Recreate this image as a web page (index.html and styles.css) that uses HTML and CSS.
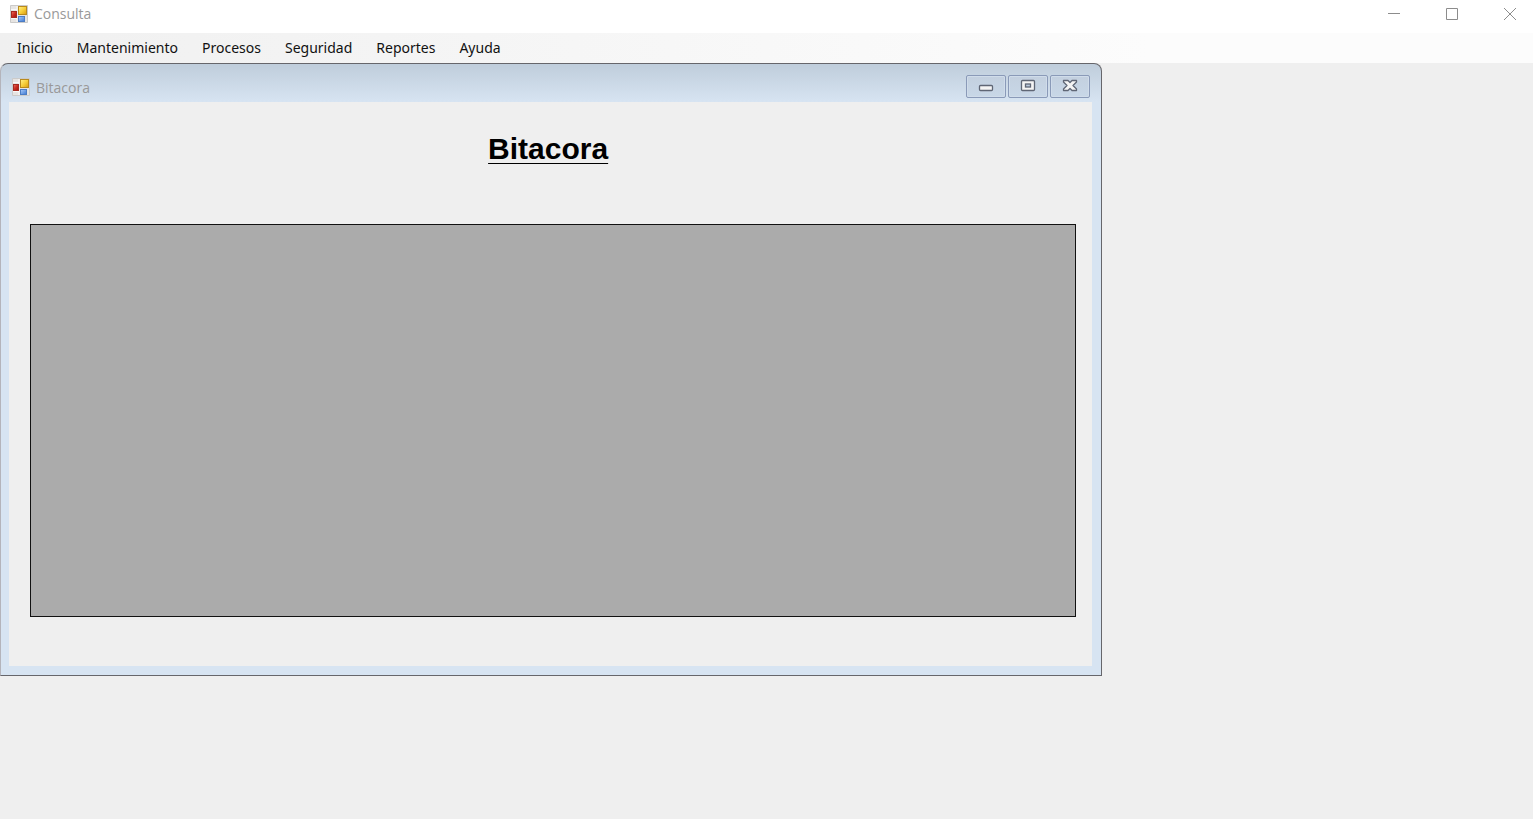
FILE: index.html
```
<!DOCTYPE html>
<html lang="es">
<head>
<meta charset="utf-8">
<title>Consulta</title>
<link rel="stylesheet" href="styles.css">
</head>
<body class="app">
<svg class="defs" width="0" height="0" aria-hidden="true">
  <defs>
    <linearGradient id="yellow" x2="1" y2="1"><stop stop-color="#fff08a"/><stop offset=".5" stop-color="#f7cf3a"/><stop offset="1" stop-color="#d99a10"/></linearGradient>
    <linearGradient id="red" x2="1" y2="1"><stop stop-color="#ec7468"/><stop offset=".5" stop-color="#c92b20"/><stop offset="1" stop-color="#9c150e"/></linearGradient>
    <linearGradient id="blue" x2="1" y2="1"><stop stop-color="#a9cbfa"/><stop offset="1" stop-color="#3d78d2"/></linearGradient>
    <symbol id="form-icon" viewBox="0 0 18 18">
      <path d="M.5 .5h17v17H.5z" fill="#e6e4e2" stroke="#cbcac9"/>
      <path d="M1 4.500h6M7 1v16M1 13.500h6" stroke="#f8f8f8"/>
      <rect x="1.500" y="6.500" width="5" height="6" fill="url(#red)" stroke="#a52a20"/>
      <rect x="8.500" y="1.500" width="8" height="8" fill="url(#yellow)" stroke="#b98a1c"/>
      <rect x="8.500" y="11.500" width="6" height="5" fill="url(#blue)" stroke="#4b7cc4"/>
    </symbol>
  </defs>
</svg>
<header class="titlebar">
  <svg class="form-icon" aria-hidden="true"><use href="#form-icon"/></svg>
  <h1 class="titlebar-text">Consulta</h1>
  <div class="window-buttons">
    <button class="window-button" type="button" aria-label="Minimizar"><svg width="12" height="12"><path d="M0 5.500h12"/></svg></button>
    <button class="window-button" type="button" aria-label="Maximizar"><svg width="12" height="12"><path d="M.5 .5h11v11H.5z"/></svg></button>
    <button class="window-button" type="button" aria-label="Cerrar"><svg width="12" height="12"><path d="M0 0l12 12M12 0L0 12"/></svg></button>
  </div>
</header>
<nav class="menu">
  <button class="menu-item" type="button">Inicio</button>
  <button class="menu-item" type="button">Mantenimiento</button>
  <button class="menu-item" type="button">Procesos</button>
  <button class="menu-item" type="button">Seguridad</button>
  <button class="menu-item" type="button">Reportes</button>
  <button class="menu-item" type="button">Ayuda</button>
</nav>
<main class="workspace">
  <section class="child">
    <header class="child-bar">
      <svg class="form-icon" aria-hidden="true"><use href="#form-icon"/></svg>
      <span class="child-title">Bitacora</span>
      <div class="child-buttons">
        <button class="child-button" type="button" aria-label="Minimizar"><svg width="16" height="14"><rect x="1.500" y="6.500" width="13" height="5" rx="1" fill="#f4f4f4" stroke="#5f6675" stroke-width="1.300"/></svg></button>
        <button class="child-button" type="button" aria-label="Maximizar"><svg width="16" height="14"><rect x="1.500" y="1.500" width="13" height="10" rx="1" fill="#f4f4f4" stroke="#5f6675" stroke-width="1.300"/><rect x="5.500" y="5" width="5" height="3" fill="#b9c8dc" stroke="#5f6675" stroke-width="1.300"/></svg></button>
        <button class="child-button" type="button" aria-label="Cerrar"><svg width="16" height="14"><path d="M1.500 1.500h4.500l2 2 2-2h4.500v1.500L11 6.500l3.500 3.500v1.500H10l-2-2-2 2H1.500V10L5 6.500 1.500 3z" fill="#f4f4f4" stroke="#5f6675" stroke-width="1.300" stroke-linejoin="round"/></svg></button>
      </div>
    </header>
    <div class="child-body">
      <h2 class="heading">Bitacora</h2>
      <div class="grid" role="grid" aria-label="Bitacora"></div>
    </div>
  </section>
</main>
</body>
</html>
```
FILE: styles.css
```
* { box-sizing: border-box; }

.app {
  margin: 0;
  min-height: 100vh;
  display: flex;
  flex-direction: column;
  background: #efefef;
  font-family: "Open Sans", "Noto Sans", sans-serif;
  font-size: 14px;
}

.defs { position: absolute; }

.titlebar {
  display: flex;
  align-items: center;
  height: 33px;
  padding: 0 0 6px 10px;
  background: #fff;
  color: #999;
}

.form-icon { width: 18px; height: 18px; flex: none; }

.titlebar-text {
  margin: 0 0 0 6px;
  font-size: 14px;
  font-weight: 400;
}

.window-buttons { display: flex; margin-left: auto; }

.window-button {
  display: flex;
  align-items: center;
  justify-content: center;
  width: 58px;
  height: 27px;
  padding: 0;
  border: 0;
  background: none;
}

.window-button:last-child { width: 52px; padding-left: 6px; }

.window-button path { fill: none; stroke: #8c8c8c; }

.menu {
  display: flex;
  align-items: center;
  height: 30px;
  padding: 0 0 2px 5px;
  background: linear-gradient(90deg, #f0f0f0, #fcfcfc 75%);
}

.menu-item {
  padding: 0 12px;
  border: 0;
  background: none;
  color: #111;
  font: 14px "Noto Sans", "Open Sans", sans-serif;
}

.workspace { flex: 1; }

.child {
  width: 71.9%;
  padding: 0 9px 9px 8px;
  border: 1px solid #66666b;
  border-left-color: #b4b4bb;
  border-radius: 8px 8px 0 0;
  background: linear-gradient(#bfcddb, #d7e4f2 38px);
}

.child-bar {
  display: flex;
  align-items: center;
  height: 38px;
  padding: 8px 2px 0 3px;
  color: #999;
}

.child-title { margin-left: 6px; }

.child-buttons { display: flex; gap: 2px; margin: 0 0 2px auto; }

.child-button {
  display: flex;
  align-items: center;
  justify-content: center;
  width: 40px;
  height: 23px;
  padding: 0;
  border: 1px solid #8a9ab8;
  border-radius: 2px;
  background: linear-gradient(#c3d0df, #c8d7e7);
  box-shadow: inset 0 0 0 1px #d0dcea;
}

.child-body {
  padding: 29px 16px 49px 21px;
  background: #efefef;
}

.heading {
  margin: 0 0 58px;
  padding-right: 10px;
  color: #000;
  font: 700 30px/35px "Liberation Sans", Arial, sans-serif;
  text-align: center;
  text-decoration: underline;
  text-decoration-thickness: 1px;
  text-underline-offset: 4px;
}

.grid {
  height: 393px;
  border: 1px solid #111;
  background: #ababab;
}
```
